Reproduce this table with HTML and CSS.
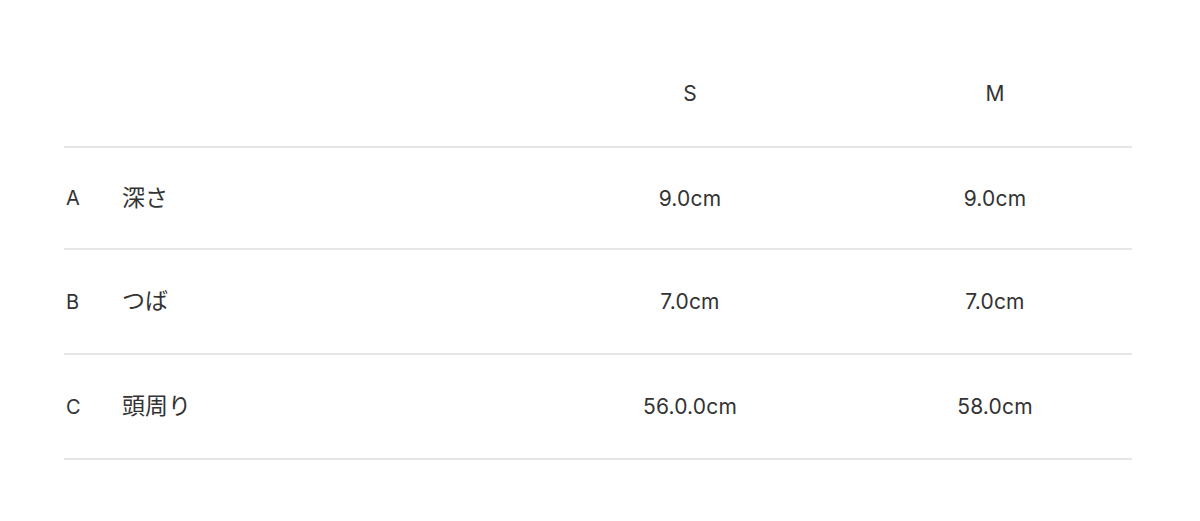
FILE: index.html
```html
<!DOCTYPE html>
<html lang="ja">
<head>
<meta charset="utf-8">
<title>サイズ表</title>
<link rel="stylesheet" href="styles.css">
</head>
<body>
<div class="size-table">
  <div class="row head">
    <div class="cell key"></div>
    <div class="cell name"></div>
    <div class="cell val">S</div>
    <div class="cell val">M</div>
  </div>
  <div class="row first">
    <div class="cell key">A</div>
    <div class="cell name">深さ</div>
    <div class="cell val">9.0cm</div>
    <div class="cell val">9.0cm</div>
  </div>
  <div class="row">
    <div class="cell key">B</div>
    <div class="cell name">つば</div>
    <div class="cell val">7.0cm</div>
    <div class="cell val">7.0cm</div>
  </div>
  <div class="row">
    <div class="cell key">C</div>
    <div class="cell name">頭周り</div>
    <div class="cell val">56.0.0cm</div>
    <div class="cell val">58.0cm</div>
  </div>
</div>
</body>
</html>
```
FILE: styles.css
```css
html, body {
  margin: 0;
  padding: 0;
  background: #ffffff;
}
body {
  font-family: Inter, "Noto Sans CJK JP", sans-serif;
  color: #333333;
}
.size-table {
  margin: 40px 68px 0 64px;
}
.row {
  display: grid;
  grid-template-columns: 27px 1fr 274px 274px;
  column-gap: 31px;
  align-items: center;
  height: 103px;
  border-bottom: 2px solid #e6e6e6;
}
.row.head {
  height: 106px;
}
.row.first {
  height: 100px;
}
.cell {
  font-size: 21px;
  line-height: 1;
  letter-spacing: 0.2px;
}
.key {
  font-size: 20px;
  padding-left: 2px;
}
.name {
  font-size: 23px;
  letter-spacing: 0;
}
.val {
  text-align: center;
}
```
